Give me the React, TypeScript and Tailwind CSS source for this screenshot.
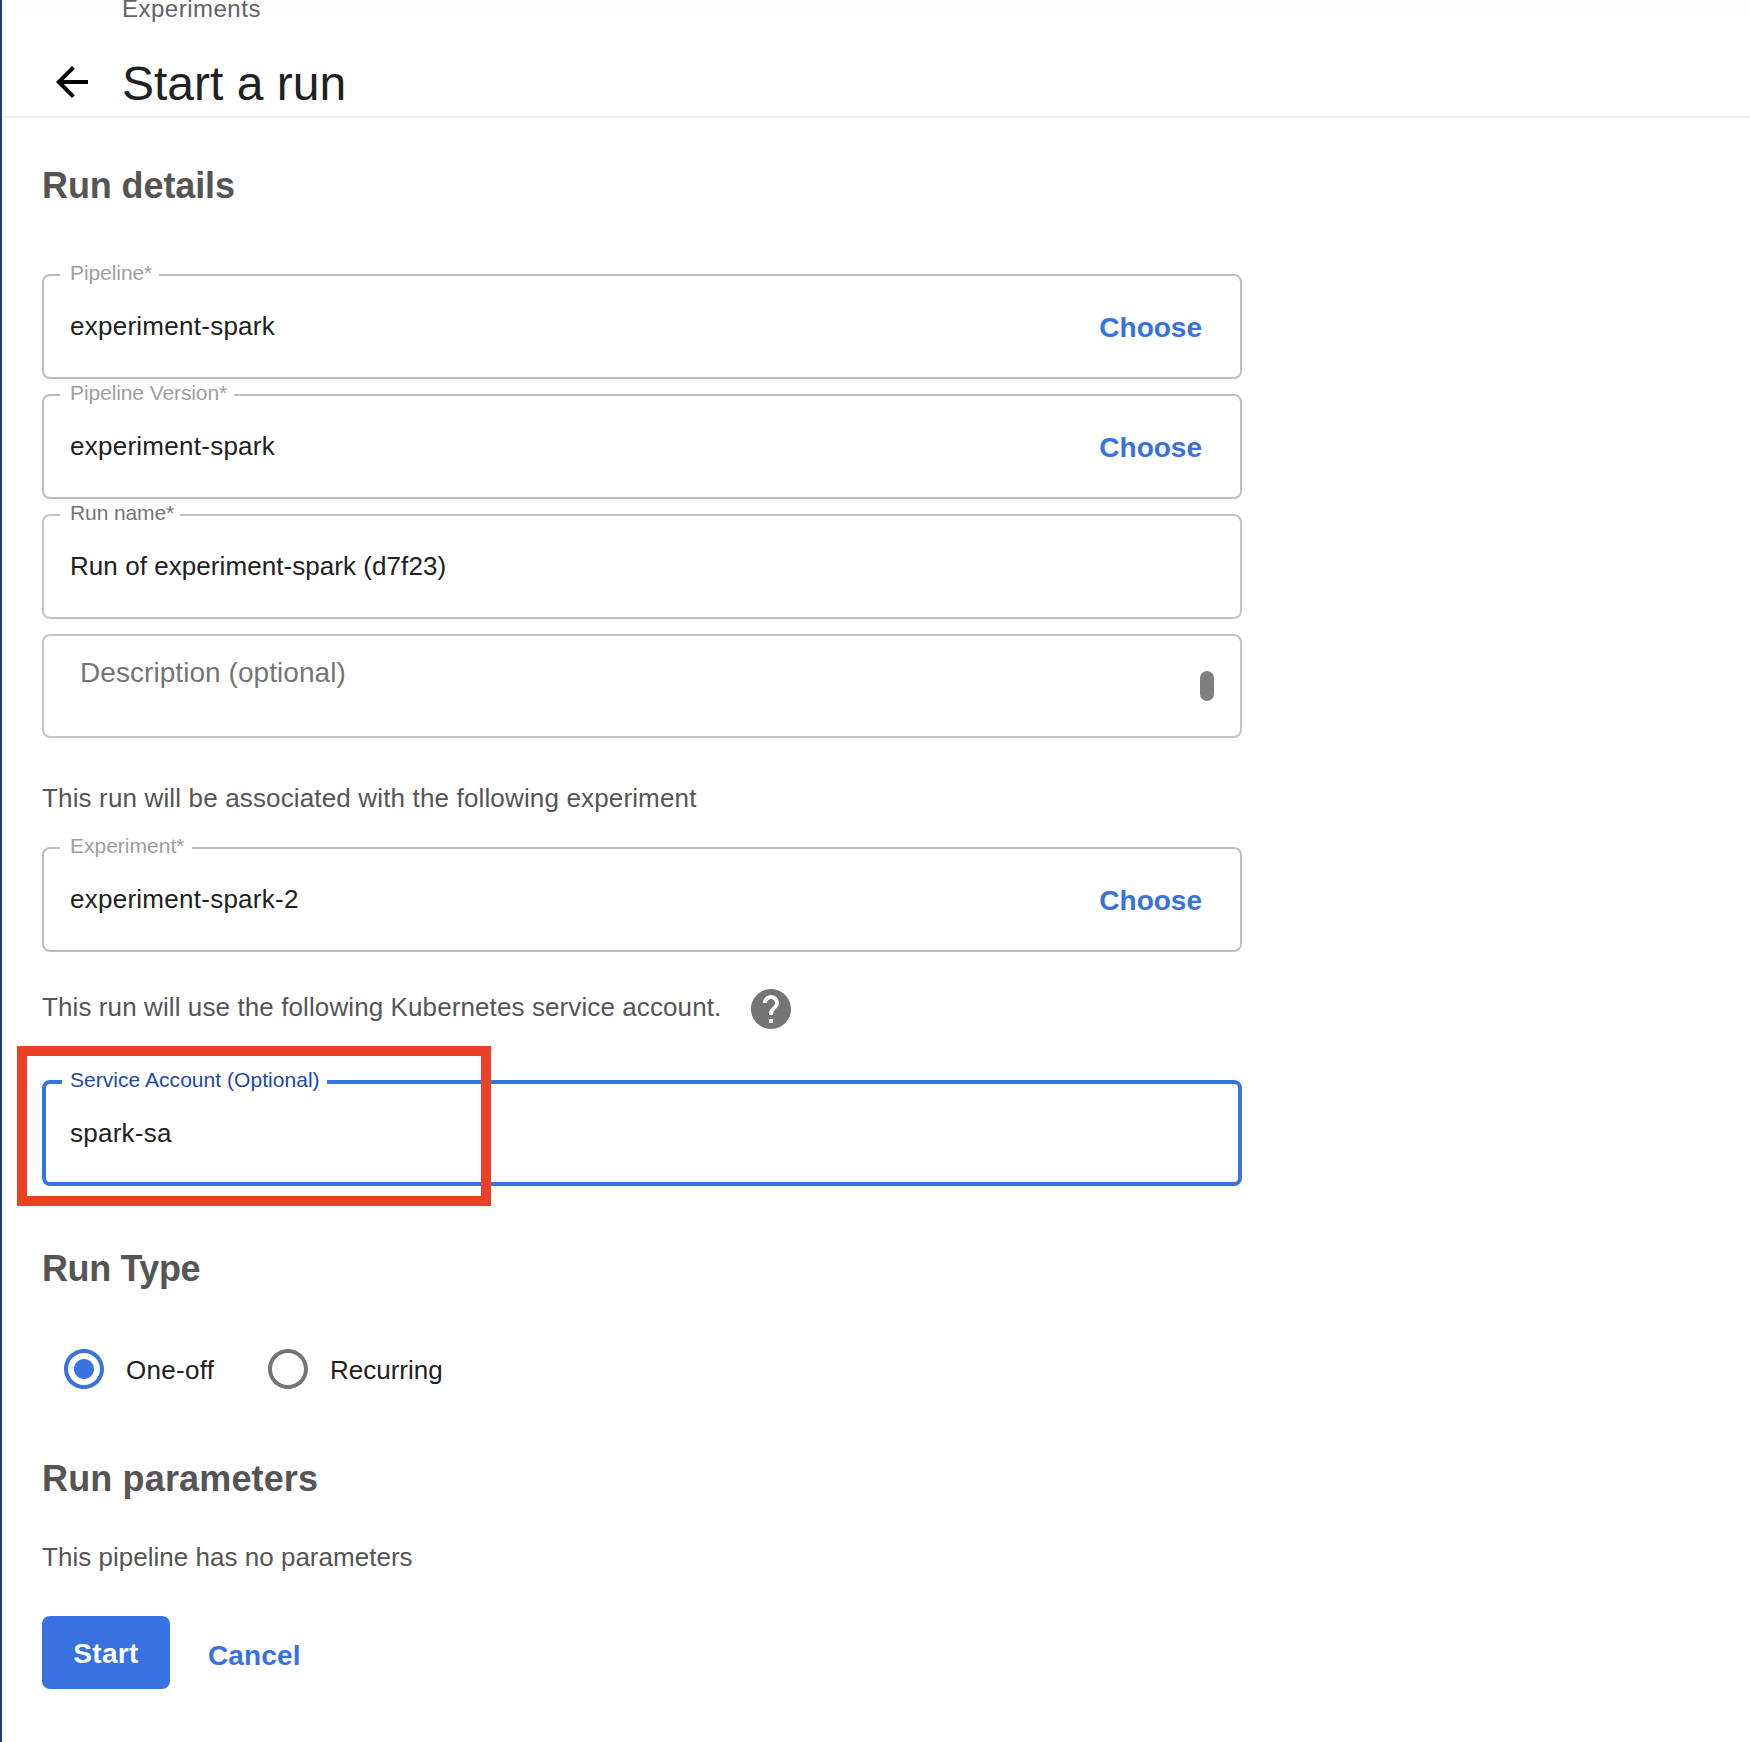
import React from "react";

type FieldProps = {
  label: string;
  labelClass: string;
  value: string;
  valueClass: string;
  choose?: boolean;
  className: string;
};

function Field({ label, labelClass, value, valueClass, choose, className }: FieldProps) {
  return (
    <div className={`relative flex h-[105px] w-[1200px] items-center justify-between rounded-lg border-2 pl-[26px] pr-[38px] ${className}`}>
      <span className={`absolute -top-[15px] left-4 h-6 whitespace-nowrap bg-white pl-2.5 text-[21px] leading-6 ${labelClass}`}>
        {label}
      </span>
      <span className={`mb-0.5 text-[26px] leading-[30px] text-[#202020] ${valueClass}`}>{value}</span>
      {choose && (
        <button className="mt-0.5 text-[28px] font-bold leading-8 text-[#3872e0]">Choose</button>
      )}
    </div>
  );
}

function Heading({ children, className }: { children: React.ReactNode; className: string }) {
  return <h2 className={`h-10 text-[36px] font-bold leading-10 text-[#555] ${className}`}>{children}</h2>;
}

export default function App() {
  return (
    <div className="h-[1742px] w-[1750px] overflow-hidden border-l-2 border-[#1a3c78] bg-white font-['Liberation_Sans',Arial,sans-serif]">
      <header className="h-[118px] border-b-2 border-[#eee] bg-linear-to-b from-[#fcfcfc] to-white to-[20px]">
        <div className="h-[58px] pl-[120px] text-[24px] leading-[18px] tracking-[0.5px] text-[#5f6368]">Experiments</div>
        <div className="flex h-[50px] items-center pl-[46px]">
          <svg viewBox="0 0 24 24" className="-mt-0.5 size-12 fill-black">
            <path d="M20 11H7.83l5.59-5.59L12 4l-8 8 8 8 1.41-1.41L7.83 13H20v-2z" />
          </svg>
          <h1 className="ml-[26px] mt-0.5 text-[48px] leading-[50px] text-[#202124]">Start a run</h1>
        </div>
      </header>

      <main className="pl-10">
        <Heading className="mt-12 tracking-[-0.1px]">Run details</Heading>

        <div className="mt-[68px] flex flex-col gap-[15px]">
          <Field label="Pipeline*" labelClass="w-[99px] tracking-[-0.08px] text-[#9e9e9e]" value="experiment-spark" valueClass="tracking-[0.26px]" choose className="border-[#bdbdbd]" />
          <Field label="Pipeline Version*" labelClass="w-[174px] tracking-[-0.1px] text-[#9e9e9e]" value="experiment-spark" valueClass="tracking-[0.26px]" choose className="border-[#bdbdbd]" />
          <Field label="Run name*" labelClass="w-[120px] tracking-[-0.1px] text-[#757575]" value="Run of experiment-spark (d7f23)" valueClass="tracking-[0.06px]" className="border-[#c4c4c4]" />
          <div className="flex h-[104px] w-[1200px] justify-between rounded-lg border-2 border-[#c4c4c4] pl-9 pr-[26px]">
            <span className="mt-[21px] text-[28px] leading-8 tracking-[0.06px] text-[#757575]">Description (optional)</span>
            <span className="mt-[35px] h-[30px] w-3.5 rounded-full bg-[#7f7f7f]" />
          </div>
        </div>

        <p className="mt-[45px] text-[26px] leading-[30px] tracking-[0.15px] text-[#555]">
          This run will be associated with the following experiment
        </p>
        <Field label="Experiment*" labelClass="w-[132px] text-[#9e9e9e]" value="experiment-spark-2" valueClass="tracking-[0.26px]" choose className="mt-[34px] border-[#bdbdbd]" />

        <div className="mt-[33px] flex h-12 items-center">
          <p className="mb-1 w-[705px] whitespace-nowrap text-[26px] leading-[30px] tracking-[0.1px] text-[#555]">
            This run will use the following Kubernetes service account.
          </p>
          <svg viewBox="0 0 24 24" className="size-12 fill-[#757575]">
            <path d="M12 2C6.48 2 2 6.48 2 12s4.48 10 10 10 10-4.48 10-10S17.52 2 12 2zm1 17h-2v-2h2v2zm2.07-7.75l-.9.92C13.45 12.9 13 13.5 13 15h-2v-.5c0-1.1.45-2.1 1.17-2.83l1.24-1.26c.37-.36.59-.86.59-1.41 0-1.1-.9-2-2-2s-2 .9-2 2H8c0-2.21 1.79-4 4-4s4 1.79 4 4c0 .88-.36 1.68-.93 2.25z" />
          </svg>
        </div>

        <div className="relative mt-[47px] flex h-[106px] w-[1200px] items-center rounded-lg border-4 border-[#3872e0] pl-6">
          <span className="absolute -top-4 left-4 h-6 w-[265px] whitespace-nowrap bg-white pl-2 text-[21px] leading-6 tracking-[0.04px] text-[#1f47ad]">
            Service Account (Optional)
          </span>
          <span className="text-[26px] leading-[30px] tracking-[0.25px] text-[#202020]">spark-sa</span>
          <div className="absolute -left-[29px] -top-[38px] h-[160px] w-[474px] border-[10px] border-[#ea4025]" />
        </div>

        <Heading className="mt-[63px] tracking-[-0.4px]">Run Type</Heading>

        <div className="mt-14 flex h-12 items-center pl-[18px] text-[26px] leading-[30px] text-[#202020]">
          <label className="flex w-[204px] items-center gap-[18px]">
            <svg viewBox="0 0 24 24" className="size-12 fill-[#3872e0]">
              <path d="M12 7c-2.76 0-5 2.24-5 5s2.24 5 5 5 5-2.24 5-5-2.24-5-5-5zm0-5C6.48 2 2 6.48 2 12s4.48 10 10 10 10-4.48 10-10S17.52 2 12 2zm0 18c-4.42 0-8-3.58-8-8s3.58-8 8-8 8 3.58 8 8-3.58 8-8 8z" />
            </svg>
            <span className="mt-0.5 tracking-[0.3px]">One-off</span>
          </label>
          <label className="flex items-center gap-[18px]">
            <svg viewBox="0 0 24 24" className="size-12 fill-[#757575]">
              <path d="M12 2C6.48 2 2 6.48 2 12s4.48 10 10 10 10-4.48 10-10S17.52 2 12 2zm0 18c-4.42 0-8-3.58-8-8s3.58-8 8-8 8 3.58 8 8-3.58 8-8 8z" />
            </svg>
            <span className="mt-0.5">Recurring</span>
          </label>
        </div>

        <Heading className="mt-[66px] tracking-[0.15px]">Run parameters</Heading>
        <p className="mt-[43px] text-[26px] leading-[30px] tracking-[0.02px] text-[#555]">This pipeline has no parameters</p>

        <div className="mt-11 flex h-[73px] items-center text-[28px] font-bold leading-8">
          <button className="h-full w-32 rounded-lg bg-[#3872e0] pt-0.5 tracking-[0.3px] text-white">Start</button>
          <button className="ml-[38px] mt-[7px] tracking-[0.15px] text-[#3872e0]">Cancel</button>
        </div>
      </main>
    </div>
  );
}
